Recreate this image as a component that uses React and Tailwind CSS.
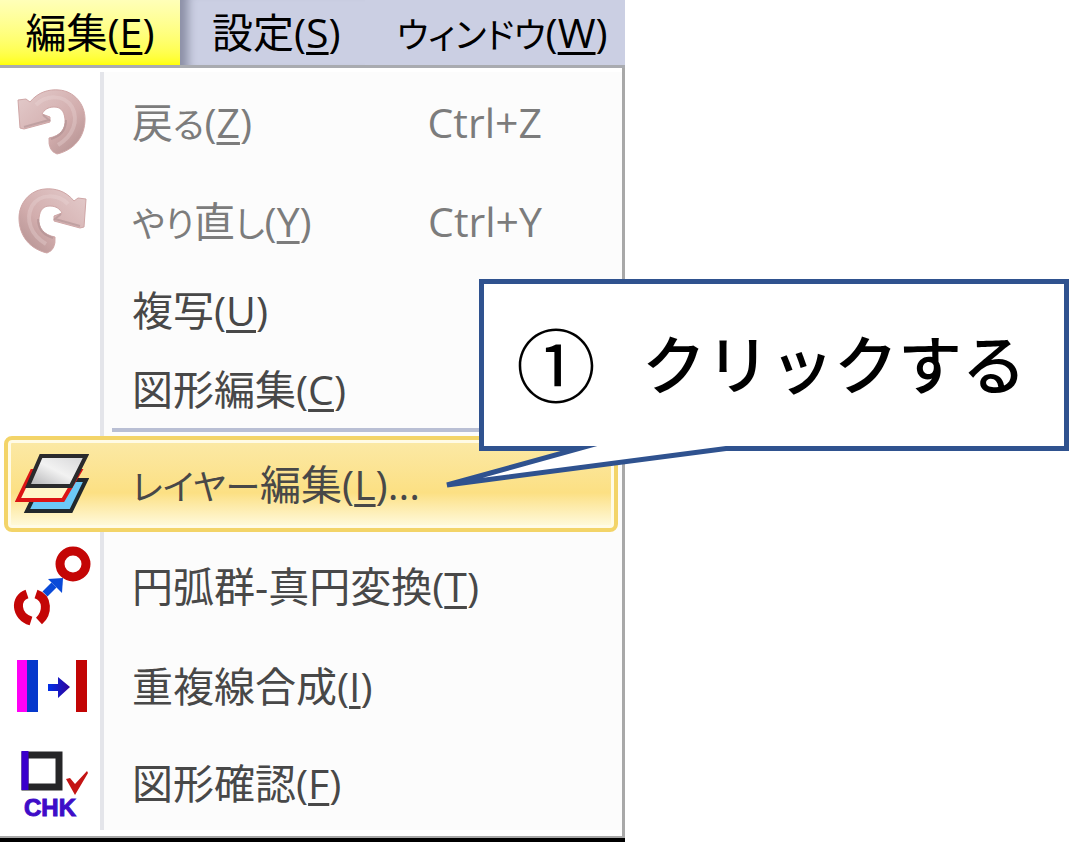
// undo / redo share one arrow, redo is mirrored
function ArrowIcon({ id, flip }) {
  return (
    <svg width="72" height="68" viewBox="0 0 72 68" className={flip ? '-scale-x-100' : ''} aria-hidden="true">
      <defs>
        <linearGradient id={id} x1="0" y1="0" x2="1" y2="1">
          <stop offset="0" stopColor="#e4cccc" />
          <stop offset="0.6" stopColor="#d2adad" />
          <stop offset="1" stopColor="#b08e8e" />
        </linearGradient>
      </defs>
      <path
        d="M2 12 L10 11 L14 14 C22 4 33 1 43 2 C58 3 69 16 69 31 C69 49 58 62 41 66 Q32 63 33 50 C44 48 50 41 49 31 C48 22 44 19 38 19 C32 19 28 22 26 26 L34 29 L34 34 L8 41 L4 40 Z"
        fill={`url(#${id})`}
        stroke="#cfa6a6"
        strokeWidth="1"
      />
      <path d="M20 17 C30 7 48 6 56 19 C63 33 57 48 42 57" fill="none" stroke="#ead6d6" strokeWidth="4" opacity="0.35" />
      <path d="M8 39 L33 32 L27 27 M50 32 C50 42 45 48 35 51" fill="none" stroke="#a88a8c" strokeWidth="2" opacity="0.5" />
    </svg>
  );
}

function LayerIcon() {
  return (
    <svg width="74" height="62" viewBox="1 0 74 62" aria-hidden="true">
      <defs>
        <linearGradient id="sheet" x1="0" y1="1" x2="1" y2="0">
          <stop offset="0.1" stopColor="#bcbcbe" />
          <stop offset="0.5" stopColor="#f2f2f2" />
          <stop offset="1" stopColor="#d4d4d6" />
        </linearGradient>
      </defs>
      <path d="M28 27 H72 L57 58 H13 Z" fill="#6cc8f6" stroke="#22282c" strokeWidth="4" />
      <path d="M18 18 H66 L49 47 H4 Z" fill="#fff5c8" stroke="#dc1414" strokeWidth="4" />
      <path d="M27 3 H72 L57 33 H14 Z" fill="url(#sheet)" stroke="#2a2a2c" strokeWidth="4" />
    </svg>
  );
}

function CircleIcon() {
  return (
    <svg width="78" height="80" viewBox="0 0 78 80" aria-hidden="true">
      <circle cx="60" cy="18" r="13" fill="none" stroke="#c40606" strokeWidth="9" />
      <path d="M14 48 C2 52 2 70 18 75" fill="none" stroke="#c40606" strokeWidth="9" />
      <path d="M23 48 C35 52 35 67 26 75" fill="none" stroke="#c40606" strokeWidth="9" />
      <path d="M32 48 L41 39" stroke="#0a4ad8" strokeWidth="7" />
      <path d="M35 33 L50 32 L49 47 Z" fill="#0a4ad8" />
    </svg>
  );
}

function MergeIcon() {
  return (
    <svg width="72" height="54" viewBox="0 0 72 54" aria-hidden="true">
      <defs>
        <linearGradient id="shaft">
          <stop offset="0" stopColor="#0030e8" />
          <stop offset="1" stopColor="#30009a" />
        </linearGradient>
      </defs>
      <rect x="1" y="1" width="11" height="52" fill="#ff00f6" />
      <rect x="11" y="1" width="11" height="52" fill="#0638cc" />
      <path d="M32 25 H42 V18 L54 28 L42 39 V32 H32 Z" fill="url(#shaft)" />
      <rect x="60" y="1" width="11" height="52" fill="#c20404" />
    </svg>
  );
}

function CheckIcon() {
  return (
    <svg width="72" height="76" viewBox="0 -5 72 76" aria-hidden="true">
      <rect x="9" y="5" width="34" height="32" fill="none" stroke="#262628" strokeWidth="7" />
      <path d="M9 1 V40" stroke="#3a00cc" strokeWidth="7" />
      <path d="M50 29 L54 28 L59 34 L71 21 L72 23 L59 45 Z" fill="#c41414" />
      <text x="8" y="66" fontFamily="Liberation Sans" fontWeight="700" fontSize="24" fill="#3e0cc8" stroke="#3e0cc8">
        CHK
      </text>
    </svg>
  );
}

const menus = [
  { label: '編集', accel: 'E', style: 'h-[65px] w-[180px] text-center bg-linear-to-b from-[#ffffb8] to-[#ffff00]' },
  { label: '設定', accel: 'S', style: 'h-[65px] pl-8 pr-6 text-left shadow-[inset_16px_0_10px_-8px_#8c90a6]' },
  { label: 'ウィンドウ', accel: 'W', style: 'h-[65px] flex-1 pl-8 text-left' },
];

const items = [
  { label: '戻る', accel: 'Z', shortcut: 'Ctrl+Z', icon: <ArrowIcon id="undo" />, disabled: true, size: 'h-[100px]' },
  { label: 'やり直し', accel: 'Y', shortcut: 'Ctrl+Y', icon: <ArrowIcon id="redo" flip />, disabled: true, size: 'h-[98px]' },
  { label: '複写', accel: 'U', size: 'h-20' },
  { label: '図形編集', accel: 'C', size: 'h-[78px]', divider: true },
  { label: 'レイヤー編集', accel: 'L', more: '...', icon: <LayerIcon />, active: true, size: 'h-24' },
  { label: '円弧群-真円変換', accel: 'T', icon: <CircleIcon />, size: 'h-[100px]' },
  { label: '重複線合成', accel: 'I', icon: <MergeIcon />, size: 'h-[100px]' },
  { label: '図形確認', accel: 'F', icon: <CheckIcon />, size: 'h-[94px]' },
];

// kana is set a little smaller than kanji
function Label({ item }) {
  const runs = item.label.split(/([\u3040-\u30ff]+)/).filter(Boolean);
  return (
    <span className="whitespace-nowrap">
      {runs.map((run, i) => (
        <span key={i} className={/[\u3040-\u30ff]/.test(run) ? 'text-[35px]' : ''}>{run}</span>
      ))}
      (<span className="underline decoration-3 underline-offset-4">{item.accel}</span>){item.more}
    </span>
  );
}

function MenuItem({ item }) {
  const tone = item.disabled ? 'text-[#7c7c7c]' : 'text-[#484848]';
  const frame = item.active
    ? 'mx-1 mb-1 rounded-lg border-4 border-[#f3d468] bg-linear-to-b from-[#fbe9a6] via-[#fce083] via-60% to-[#fffbe0] shadow-[inset_0_0_0_3px_#fffbe6]'
    : 'px-2';
  return (
    <li>
      <button
        type="button"
        disabled={item.disabled}
        className={`flex items-center text-left ${item.active ? 'w-[614px]' : 'w-full'} ${item.size} ${tone} ${frame}`}
      >
        <span className="flex w-22 shrink-0 justify-center">{item.icon}</span>
        <span className="flex-1 pl-9">
          <Label item={item} />
        </span>
        {item.shortcut && <kbd className="pr-18 font-[inherit]">{item.shortcut}</kbd>}
      </button>
      {item.divider && <hr className="mb-1 ml-28 mr-2 border-t-4 border-[#b9bfd4]" />}
    </li>
  );
}

function Callout() {
  return (
    <div className="absolute left-[479px] top-[279px] flex h-[172px] w-[590px] items-center border-5 border-[#2f528f] bg-white pl-8 text-black [font-feature-settings:normal]">
      <span className="w-[126px] text-[80px] leading-none">①</span>
      <span className="whitespace-nowrap text-[64px] font-medium leading-none">クリックする</span>
      <svg className="absolute -left-10 top-[162px]" width="300" height="48" viewBox="0 0 300 48" aria-hidden="true">
        <path d="M162 -5 L3 39 L282 2 V-5 Z" fill="#fff" />
        <path d="M162 -5 L3 39 L282 2.5 H300" fill="none" stroke="#2f528f" strokeWidth="5" />
      </svg>
    </div>
  );
}

export default function App() {
  return (
    <main className="relative min-h-screen bg-white font-['Open_Sans','Noto_Sans_CJK_JP',sans-serif] text-[41px] leading-none [font-feature-settings:'palt']">
      <div className="w-[625px] border-b-4 border-black">
        <nav className="flex h-[68px] border-b-3 border-[#a9abb0] bg-[#cbcfe3] text-black">
          {menus.map((m) => (
            <button key={m.accel} type="button" className={m.style}>
              <Label item={m} />
            </button>
          ))}
        </nav>
        <ul className="border-b-2 border-r-3 border-[#a8a8a8] bg-[linear-gradient(to_right,#fff_100px,#e4e5ea_100px,#e4e5ea_104px,#fcfcfc_104px)] bg-clip-content pb-1.5 pt-1">
          {items.map((item) => (
            <MenuItem key={item.accel} item={item} />
          ))}
        </ul>
      </div>
      <Callout />
    </main>
  );
}
